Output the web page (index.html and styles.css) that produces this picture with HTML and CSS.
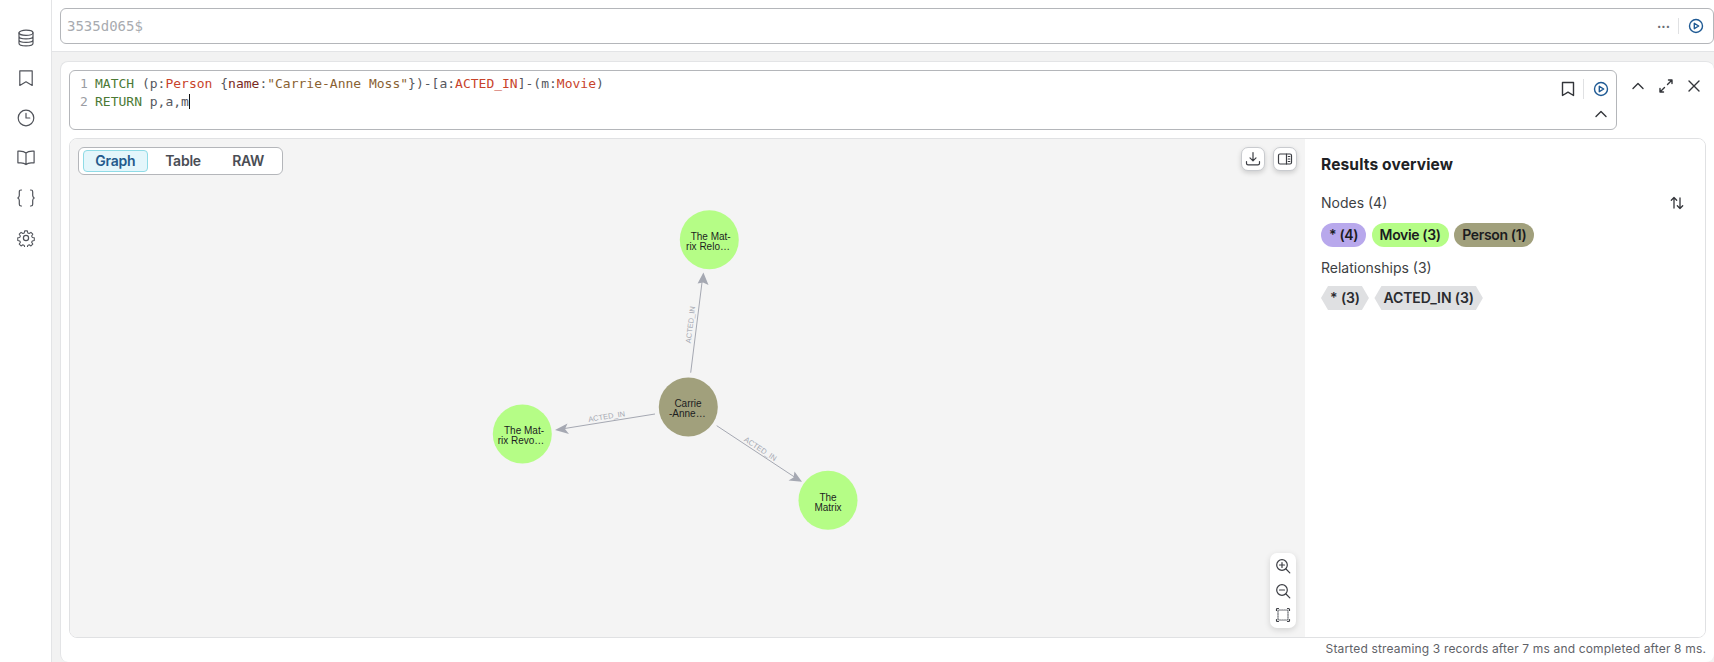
FILE: index.html
```html
<!DOCTYPE html>
<html lang="en">
<head>
<meta charset="utf-8">
<title>Neo4j Browser</title>
<link rel="stylesheet" href="styles.css">
</head>
<body>
<div class="app">
  <nav class="sidebar">
    <svg class="nav-icon" viewBox="0 0 18 18"><ellipse cx="9" cy="3.8" rx="7" ry="2.6"/><path d="M2 3.800v10.400c0 1.400 3.100 2.600 7 2.600s7-1.200 7-2.600V3.800M2 7.300c0 1.400 3.100 2.600 7 2.600s7-1.200 7-2.600M2 10.800c0 1.400 3.100 2.600 7 2.600s7-1.200 7-2.600"/></svg>
    <svg class="nav-icon" viewBox="0 0 18 18"><path d="M2.800 1.800h12.400v14.600L9 12.800l-6.200 3.600z"/></svg>
    <svg class="nav-icon" viewBox="0 0 18 18"><circle cx="9" cy="9" r="7.800"/><path d="M9 4.400V9h3.800"/></svg>
    <svg class="nav-icon" viewBox="0 0 18 18"><path d="M9 4C7.600 2.800 5.400 2.200 2.800 2.200H.9v11.600h3c2.200 0 3.900.6 5.100 1.800 1.200-1.200 2.900-1.800 5.100-1.800h3V2.200h-1.900C12.600 2.200 10.400 2.800 9 4zM9 4v11.600"/></svg>
    <svg class="nav-icon" viewBox="0 0 18 18"><path d="M4.500 1H4C2.900 1 2.300 1.600 2.300 2.700v3.900c0 1.100-.5 1.900-1.500 2.400 1 .5 1.500 1.300 1.500 2.400v3.900C2.300 16.400 2.900 17 4 17h.5M13.500 1h.5c1.100 0 1.700.6 1.700 1.700v3.900c0 1.100.5 1.900 1.500 2.400-1 .5-1.500 1.300-1.500 2.400v3.900c0 1.100-.6 1.700-1.700 1.700h-.5"/></svg>
    <svg class="nav-icon" viewBox="0 0 18 18"><circle cx="9" cy="9" r="2.600"/><path d="M7.500.9h3l.5 2.300 1.600.7 2-1.300 2.100 2.100-1.300 2 .7 1.600 2.300.5v3l-2.300.5-.7 1.600 1.300 2-2.100 2.100-2-1.300-1.600.7-.5 2.300h-3L7 17.400l-1.600-.7-2 1.300-2.100-2.100 1.300-2-.7-1.600-2.300-.5v-3l2.300-.5.7-1.600-1.300-2 2.100-2.100 2 1.300L7 3.200z" transform="translate(1.100 1.100) scale(.88)"/></svg>
  </nav>
  <main class="main">
    <header class="topbar">
      <div class="prompt">
        <span class="prompt-text">3535d065$</span>
        <span class="dots">···</span>
        <span class="divider"></span>
        <svg class="run-icon" viewBox="0 0 16 16"><circle cx="8" cy="8" r="6.500"/><path d="M6.300 5.300v5.400L10.700 8z"/></svg>
      </div>
    </header>
    <section class="card">
      <div class="editor-row">
        <div class="editor">
          <div class="code">
            <div class="line"><span class="gutter">1</span><span class="kw">MATCH</span> (p:<span class="label">Person</span> {<span class="prop">name</span>:<span class="str">"Carrie-Anne Moss"</span>})-[a:<span class="label">ACTED_IN</span>]-(m:<span class="label">Movie</span>)</div>
            <div class="line"><span class="gutter">2</span><span class="kw">RETURN</span> p,a,m<span class="caret"></span></div>
          </div>
          <div class="editor-tools">
            <div class="editor-tools-top">
              <svg class="tool-icon" viewBox="0 0 16 16"><path d="M2.500 1.500h11v13L8 11.200l-5.500 3.300z"/></svg>
              <span class="divider tall"></span>
              <svg class="run-icon" viewBox="0 0 16 16"><circle cx="8" cy="8" r="6.500"/><path d="M6.300 5.300v5.400L10.700 8z"/></svg>
            </div>
            <svg class="tool-icon chevron-low" viewBox="0 0 16 16"><path d="M3 10.500 8 5.500l5 5"/></svg>
          </div>
        </div>
        <div class="frame-tools">
          <svg class="tool-icon" viewBox="0 0 16 16"><path d="M3 10.500 8 5.500l5 5"/></svg>
          <svg class="tool-icon" viewBox="0 0 16 16"><path d="M9.500 6.500 14 2M10.500 2H14v3.500M6.500 9.500 2 14M2 10.500V14h3.500"/></svg>
          <svg class="tool-icon" viewBox="0 0 16 16"><path d="M3 3l10 10M13 3 3 13"/></svg>
        </div>
      </div>
      <div class="results">
        <div class="graph-pane">
          <div class="tabs">
            <button class="tab active">Graph</button>
            <button class="tab">Table</button>
            <button class="tab raw">RAW</button>
          </div>
          <div class="graph-actions">
            <button class="float-btn"><svg viewBox="0 0 16 16"><path d="M8 1.500v8M5 6.800l3 3 3-3M1.500 10.500v1.700c0 1 .6 1.600 1.600 1.600h9.800c1 0 1.600-.6 1.600-1.600v-1.700"/></svg></button>
            <button class="float-btn"><svg viewBox="0 0 16 16"><rect x="1.500" y="3" width="13" height="10" rx="1.500"/><path d="M9.500 3v10M11.300 5.500h1.500M11.300 8h1.500M11.300 10.500h1.500"/></svg></button>
          </div>
          <svg class="graph" viewBox="70 139 1235 498">
            <g class="rel">
              <path d="M690.700 372.700 702.800 276"/>
              <path d="M655 414 559 429.400"/>
              <path d="M716.700 425.700 797.500 479"/>
            </g>
            <g class="arrow">
              <path d="M703.400 272.500 708.500 285 703 282.500 697.600 283.600z"/>
              <path d="M555 430 567.500 423.500 565 429 569 434z"/>
              <path d="M802 481.800 788.500 480.500 793.500 477.500 794.500 471.500z"/>
            </g>
            <g class="rel-label">
              <text transform="translate(693 325) rotate(-83)">ACTED_IN</text>
              <text transform="translate(607 419) rotate(-9)">ACTED_IN</text>
              <text transform="translate(759 451) rotate(33.500)">ACTED_IN</text>
            </g>
            <circle class="movie" cx="709.300" cy="239.700" r="29.500"/>
            <circle class="person" cx="688.300" cy="407" r="29.500"/>
            <circle class="movie" cx="522.300" cy="434" r="29.500"/>
            <circle class="movie" cx="828" cy="500.300" r="29.500"/>
            <g class="node-label">
              <text x="710.700" y="240">The Mat-</text>
              <text x="708" y="250">rix Relo…</text>
              <text x="688" y="407">Carrie</text>
              <text x="687.300" y="417">-Anne…</text>
              <text x="524" y="434">The Mat-</text>
              <text x="521" y="444">rix Revo…</text>
              <text x="828" y="500.500">The</text>
              <text x="828" y="510.500">Matrix</text>
            </g>
          </svg>
          <div class="zoom-box">
            <svg viewBox="0 0 16 16"><circle cx="7" cy="7" r="5.300"/><path d="M11 11l3.800 3.800M7 4.500v5M4.500 7h5"/></svg>
            <svg viewBox="0 0 16 16"><circle cx="7" cy="7" r="5.300"/><path d="M11 11l3.800 3.800M4.500 7h5"/></svg>
            <svg viewBox="0 0 16 16"><rect class="dash" x="3" y="3" width="10" height="10" rx="1"/><path d="M1.500 3.500V2.500a1 1 0 0 1 1-1h1M12.500 1.500h1a1 1 0 0 1 1 1v1M14.500 12.500v1a1 1 0 0 1-1 1h-1M3.500 14.500h-1a1 1 0 0 1-1-1v-1"/></svg>
          </div>
        </div>
        <aside class="overview">
          <h2 class="overview-title">Results overview</h2>
          <div class="section-head">
            <span>Nodes (4)</span>
            <svg class="sort-icon" viewBox="0 0 16 16"><path d="M5 13V2.500M2.300 5.200 5 2.500l2.700 2.700M11 3v10.500M8.300 10.800l2.700 2.700 2.700-2.700"/></svg>
          </div>
          <div class="pills">
            <span class="pill all">* (4)</span>
            <span class="pill movie-pill">Movie (3)</span>
            <span class="pill person-pill">Person (1)</span>
          </div>
          <div class="section-head rel-head"><span>Relationships (3)</span></div>
          <div class="pills">
            <span class="hex">* (3)</span>
            <span class="hex">ACTED_IN (3)</span>
          </div>
        </aside>
      </div>
      <footer class="status">Started streaming 3 records after 7 ms and completed after 8 ms.</footer>
    </section>
  </main>
</div>
</body>
</html>
```
FILE: styles.css
```css
* { box-sizing: border-box; }
html, body { margin: 0; height: 100%; overflow: hidden; }
body { font-family: "Inter", "Noto Sans", sans-serif; color: #2b2d31; background: #fff; }
button { font-family: inherit; }
.app { display: flex; height: 662px; }

.sidebar { width: 52px; flex: none; border-right: 1px solid #e3e4e6; display: flex; flex-direction: column; align-items: center; padding-top: 29px; gap: 22px; background: #fff; }
.nav-icon { width: 18px; height: 18px; fill: none; stroke: #50535a; stroke-width: 1.200; stroke-linejoin: round; stroke-linecap: round; display: block; }

.main { flex: 1; min-width: 0; background: #f2f2f2; display: flex; flex-direction: column; }
.topbar { height: 52px; flex: none; background: #fff; padding: 8px 0 8px 8px; border-bottom: 1px solid #e3e4e6; }
.prompt { height: 36px; border: 1px solid #b4b6ba; border-radius: 6px; display: flex; align-items: center; padding: 0 9px 0 6px; background: #fff; }
.prompt-text { flex: 1; font: 14px "DejaVu Sans Mono", monospace; color: #a8abb0; }
.dots { font-size: 13px; font-weight: 700; color: #6a6d73; margin-right: 8px; }
.divider { width: 1px; height: 16px; background: #e0e1e3; margin-right: 9px; }
.divider.tall { height: 20px; margin: 0 9px 0 7px; }
.run-icon { width: 16px; height: 16px; fill: none; stroke: #1f5a94; stroke-width: 1.400; stroke-linejoin: round; display: block; }

.card { flex: 1; min-height: 0; margin: 9px 0 0 8px; background: #fff; border: 1px solid #e3e4e6; border-right: 0; border-bottom: 0; border-radius: 8px; padding: 8px 8px 0 8px; display: flex; flex-direction: column; }
.editor-row { display: flex; height: 60px; flex: none; }
.editor { width: 1548px; flex: none; border: 1px solid #b4b6ba; border-radius: 6px; display: flex; justify-content: space-between; padding: 4px 9px 0 10px; }
.code { font: 13px/18px "DejaVu Sans Mono", monospace; color: #55585e; }
.line { height: 18px; white-space: pre; }
.gutter { display: inline-block; width: 15px; color: #9a9da3; }
.kw { color: #4c7a35; }
.label { color: #c8432b; }
.prop { color: #7a2a22; }
.str { color: #8a6232; }
.caret { display: inline-block; width: 1px; height: 15px; background: #111; vertical-align: -3px; }
.editor-tools { display: flex; flex-direction: column; align-items: flex-end; }
.editor-tools-top { display: flex; align-items: center; height: 24px; margin-top: 2px; margin-right: -2px; }
.tool-icon { width: 16px; height: 16px; fill: none; stroke: #33353a; stroke-width: 1.400; stroke-linejoin: round; stroke-linecap: round; display: block; }
.chevron-low { margin-top: 5px; margin-right: -2px; }
.frame-tools { flex: 1; display: flex; justify-content: flex-end; gap: 12px; padding: 8px 4px 0 0; }

.results { flex: none; height: 500px; margin-top: 8px; border: 1px solid #e0e1e3; border-radius: 8px; display: flex; overflow: hidden; }
.graph-pane { width: 1235px; flex: none; background: #f4f4f4; position: relative; padding: 8px; display: flex; justify-content: space-between; align-items: flex-start; }
.tabs { position: relative; z-index: 1; display: flex; height: 28px; width: 205px; border: 1px solid #b4b6ba; border-radius: 6px; background: #fff; padding: 2px 4px; gap: 3px; }
.tab { border: 1px solid transparent; background: none; border-radius: 4px; font-size: 14px; font-weight: 600; letter-spacing: -.25px; color: #4a4d54; padding: 0; width: 65px; height: 22px; line-height: 20px; }
.tab.active { background: #e4f6fb; border-color: #8fdbe6; color: #245a8c; }
.tab.raw { width: 60px; }
.graph-actions { position: relative; z-index: 1; display: flex; gap: 8px; }
.float-btn { width: 24px; height: 24px; padding: 3px; border: 1px solid #c9cbcf; border-radius: 7px; background: #fff; box-shadow: 0 2px 5px rgba(0,0,0,.16); display: flex; }
.float-btn svg { width: 16px; height: 16px; fill: none; stroke: #3c3e44; stroke-width: 1.200; stroke-linejoin: round; stroke-linecap: round; }
.graph { position: absolute; inset: 0; width: 1235px; height: 498px; }
.rel path { fill: none; stroke: #a5a8b2; stroke-width: 1; }
.arrow path { fill: #a5a8b2; }
.rel-label text { font: 7.500px "Liberation Sans", sans-serif; fill: #a5a8b2; text-anchor: middle; }
.movie { fill: #b5fd86; }
.person { fill: #a1a07c; }
.node-label text { font: 10px "Liberation Sans", sans-serif; fill: #1c1d1f; text-anchor: middle; }
.zoom-box { position: absolute; right: 9px; bottom: 9px; width: 26px; height: 75px; background: #fff; border-radius: 7px; box-shadow: 0 2px 6px rgba(0,0,0,.14); display: flex; flex-direction: column; align-items: center; justify-content: space-between; padding: 5px 0; }
.zoom-box svg { width: 16px; height: 16px; fill: none; stroke: #3c3e44; stroke-width: 1.200; stroke-linecap: round; }
.zoom-box .dash { stroke-dasharray: 1.500 1; stroke: #6c6f75; }

.overview { flex: 1; background: #fff; padding: 16px 20px 0 16px; }
.overview-title { margin: 0; font-size: 15.500px; line-height: 20px; font-weight: 700; letter-spacing: .15px; color: #202124; }
.section-head { display: flex; justify-content: space-between; align-items: center; font-size: 14px; line-height: 20px; margin-top: 18px; color: #3d3f44; }
.rel-head { margin-top: 11px; }
.sort-icon { width: 16px; height: 16px; fill: none; stroke: #33353a; stroke-width: 1.300; stroke-linecap: round; stroke-linejoin: round; }
.pills { display: flex; gap: 5.500px; margin-top: 10px; }
.rel-head + .pills { margin-top: 8px; }
.pill { height: 24px; line-height: 24px; border-radius: 12px; padding: 0 8px; font-size: 14px; font-weight: 600; letter-spacing: -.35px; color: #1b1c1f; }
.all { background: #b8a8ec; }
.movie-pill { background: #b5fd86; }
.person-pill { background: #a1a07c; }
.hex { height: 24px; line-height: 24px; padding: 0 9px; font-size: 14px; font-weight: 600; letter-spacing: -.1px; color: #2a2b2f; background: #dfe0e2; clip-path: polygon(7px 0, calc(100% - 7px) 0, 100% 50%, calc(100% - 7px) 100%, 7px 100%, 0 50%); }

.status { text-align: right; font-size: 12px; line-height: 16px; letter-spacing: .16px; color: #5f6268; padding-top: 3px; white-space: nowrap; }
```
